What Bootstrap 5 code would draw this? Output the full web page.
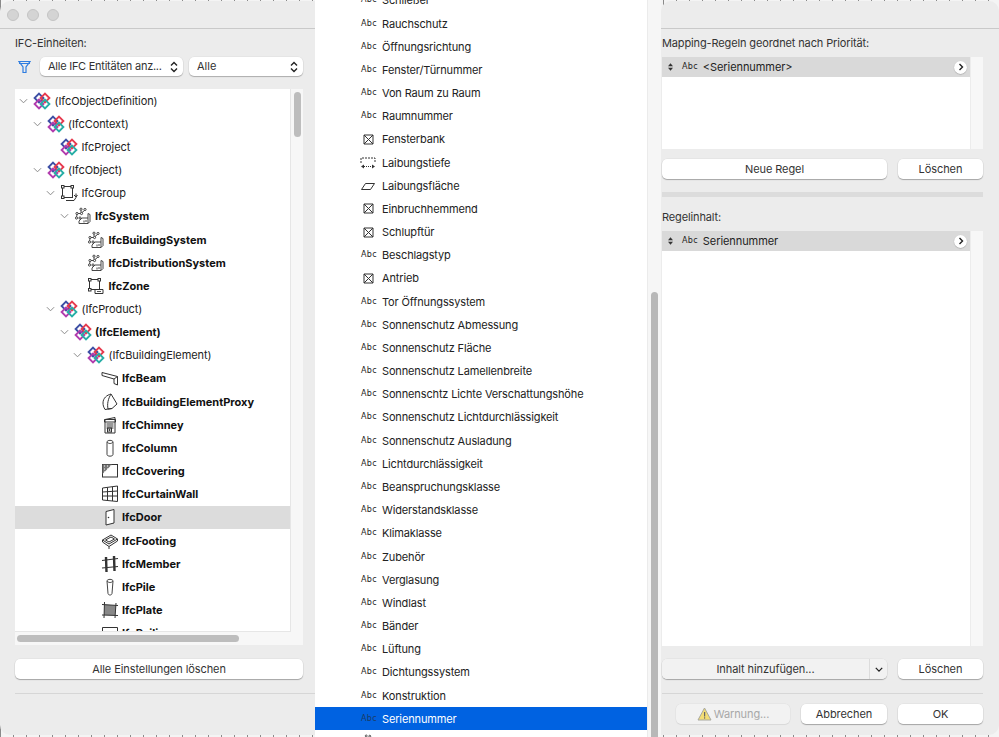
<!DOCTYPE html>
<html lang="de">
<head>
<meta charset="utf-8">
<title>IFC-Einheiten</title>
<link rel="stylesheet" href="https://cdn.jsdelivr.net/npm/bootstrap@5.3.0/dist/css/bootstrap.min.css">
<style>
html,body{height:737px;overflow:hidden}
body{background:#fff;font-family:Inter,"Liberation Sans",sans-serif;font-size:11px;line-height:16px;color:#222}
.defs-holder{position:absolute;width:0;height:0}
.stage{width:999px;height:737px;background:repeating-linear-gradient(90deg,#8a8a8a 0 1px,#f4f4f4 1px 13px)}
.pane-l,.pane-r{background:#ececec;height:734px;margin-top:1px;flex:none}
.pane-l{width:315px;border-radius:10px 0 0 10px;padding-right:12px}
.pane-r{width:338px;border-radius:10px 10px 10px 0;padding-right:16px}
.bar-l,.bar-r{height:28px;border-bottom:1px solid #c9c9c9;flex:none}
.bar-l{margin-right:-12px;padding-left:7px;gap:8px;border-top-left-radius:10px}
.bar-r{margin-right:-16px}
.dot{width:12px;height:12px;border-radius:50%;background:#d4d4d4;border:1px solid #c4c4c4}
.body-l{padding-left:15px}
.body-r{padding-left:1px}
.lbl{height:16px;margin-top:6px;color:#333;letter-spacing:-.13px}
.lbl-2{margin-top:12px}
.filter-row{margin-top:6px;height:19px}
.filter-ico{width:25px;flex:none;padding-left:3px}
select.mac-sel{height:19px;min-height:0;padding:0 16px 0 8px;border:0;border-radius:5px;font-size:11px;line-height:19px;color:#333;box-shadow:0 1px 1px rgba(0,0,0,.25),0 0 0 .5px rgba(0,0,0,.06);background-position:right 5px center;background-size:8px 12px;background-image:url("data:image/svg+xml,%3Csvg xmlns='http://www.w3.org/2000/svg' viewBox='0 0 8 12'%3E%3Cpath d='M1 4.5 4 1.5 7 4.5M1 7.5 4 10.5 7 7.5' fill='none' stroke='%23222' stroke-width='1.4'/%3E%3C/svg%3E")}
.sel-a{width:143px;flex:none;letter-spacing:-.25px}
.sel-b{width:114px;flex:none;margin-left:6px}
.tree-frame{margin-top:13px;height:556px;background:#f7f7f7}
.tree-top{height:543px}
.tree-view{width:276px;background:#fff;overflow:hidden;border-right:1px solid #e6e6e6;border-bottom:1px solid #e6e6e6}
.vtrack{width:12px;flex:none;padding:3px 2px 0 3px}
.vthumb{height:45px;background:#bdbdbd;border-radius:4px}
.htrack{height:13px;padding:3px 0 0 2px}
.hthumb{width:222px;height:7px;background:#bdbdbd;border-radius:4px}
.node{height:23.17px;white-space:nowrap;letter-spacing:-.08px}
.node.picked{background:#dcdcdc}
.node b{font-weight:700;color:#111;letter-spacing:0}
.lv1{padding-left:13.5px}.lv2{padding-left:27px}.lv3{padding-left:40.5px}.lv4{padding-left:54px}.lv5{padding-left:67.5px}
.twist{width:17px;flex:none;text-align:center;line-height:0}
.glyph{width:18px;height:18px;flex:none;margin:0 3.5px 0 1px}
.mac-btn{--bs-btn-padding-y:0;--bs-btn-padding-x:0;--bs-btn-font-size:11px;--bs-btn-bg:#fff;--bs-btn-border-width:0;--bs-btn-border-radius:5px;--bs-btn-color:#333;--bs-btn-line-height:20px;height:20px;letter-spacing:-.08px;box-shadow:0 1px 1px rgba(0,0,0,.28),0 0 0 .5px rgba(0,0,0,.06);display:block;flex:none}
.wide-btn{margin-top:14px;width:288px}
.sep{height:1px;background:#d6d6d6;margin-top:14px}
.sep-l{margin-right:-12px}
.menu-col{width:332px;flex:none;background:#fff;overflow:hidden}
.entry{height:23.18px;white-space:nowrap;color:#222;letter-spacing:-.14px}
.entry-first{margin-top:-11.2px}
.entry-hit{background:#0062e1;color:#fff}
.entry-hit .abc{color:#1b3b66}
.slot-w{width:67px;flex:none;display:flex;justify-content:center;padding-left:39px;line-height:0}
.abc{font-family:"DejaVu Sans",sans-serif;font-size:8px;line-height:16px;letter-spacing:.3px;color:#222;width:67px;flex:none;padding-left:46px}
.menu-track{width:14px;flex:none;background:#f6f6f6;border-left:1px solid #ebebeb;padding:292px 3px 0 3px}
.menu-thumb{height:445px;background:#b8b8b8;border-radius:4px 4px 0 0}
.tbl{background:#f7f7f7;flex:none;margin-top:6px}
.tbl-in{width:309px;background:#fff;border-right:1px solid #ececec}
.tbl-a{height:92px}
.tbl-b{height:415px}
.tbl-row{height:20px;background:#d9d9d9;padding-left:5px;padding-right:3px;letter-spacing:-.08px}
.tbl-row .abc{width:auto;padding-left:8px;margin-right:5px}
.more{width:13px;height:13px;border-radius:50%;background:#fff;box-shadow:0 .5px 1px rgba(0,0,0,.3);line-height:0}
.btn-row{height:20px;flex:none;gap:11px}
.gap-10{margin-top:10px}
.gap-13{margin-top:13px}
.btn-big{width:225px}
.btn-small{width:85px}
.btn-cancel{width:86px}
.split{width:225px;height:20px;flex:none;border-radius:5px;background:#f2f2f2;box-shadow:0 1px 1px rgba(0,0,0,.28),0 0 0 .5px rgba(0,0,0,.06);overflow:hidden}
.split .mac-btn{--bs-btn-bg:#f2f2f2;box-shadow:none;border-radius:0}
.split-main{width:207px}
.split-more{width:18px;border-left:1px solid #dcdcdc!important}
.hdiv{height:5px;background:#dcdcdc;margin-top:13px;flex:none}
.warn{width:114px;margin-left:14px;color:#a8a8a8;font-size:11px;letter-spacing:-.1px;gap:2px;height:20px;background:#f2f2f2;border-radius:5px;box-shadow:0 0 0 .5px rgba(0,0,0,.05),0 1px 1px rgba(0,0,0,.06)}
</style>
</head>
<body>
<svg class="defs-holder" aria-hidden="true">
<defs>
<symbol id="i-ifc" viewBox="0 0 18 18"><g fill="none" stroke-width="1.9"><path d="M6 1.6 10.4 6 6 10.4 1.6 6Z" stroke="#3d4fa5"/><path d="M12 1.6 16.4 6 12 10.4 7.6 6Z" stroke="#e63a4e"/><path d="M6 7.6 10.4 12 6 16.4 1.6 12Z" stroke="#b23cae"/><path d="M12 7.6 16.4 12 12 16.4 7.600 12Z" stroke="#27aea6"/></g></symbol>
<symbol id="i-group" viewBox="0 0 18 18"><g fill="none" stroke="#333"><rect x="2.500" y="2.500" width="10" height="11"/><rect x="1.500" y="1.500" width="2.500" height="2.500" fill="#fff"/><rect x="11" y="1.500" width="2.500" height="2.500" fill="#fff"/><rect x="1.500" y="12" width="2.500" height="2.500" fill="#fff"/><path d="M6 16.500h8l2-3v-4M14 11l2 2 1.500-2"/></g></symbol>
<symbol id="i-sys" viewBox="0 0 18 18"><g fill="none" stroke="#333" stroke-width=".9"><circle cx="7" cy="2.200" r="1.100"/><circle cx="11" cy="2.500" r="1.100"/><circle cx="3" cy="6.500" r="1.100"/><circle cx="2.500" cy="11" r="1.100"/><circle cx="7.500" cy="6.500" r="1.100"/><circle cx="6" cy="11" r="1.100"/><path d="M7 3.300v2.100M10.500 3.500 8 5.500M4.100 6.500h2.300M3 7.600 2.600 9.900"/><path d="M5 16.500h9l2-2v-7l-2-1v4.500H8L5 14z" fill="#fff"/><path d="M14 11v5.500M12 13v2M10 13.500v2"/></g></symbol>
<symbol id="i-zone" viewBox="0 0 18 18"><g fill="none" stroke="#333"><rect x="2.500" y="2.500" width="10" height="10"/><rect x="1.500" y="1.500" width="2.500" height="2.500" fill="#fff"/><rect x="11" y="1.500" width="2.500" height="2.500" fill="#fff"/><rect x="1.500" y="11.500" width="2.500" height="2.500" fill="#fff"/></g><path d="M8 12.500h8v4H8z" fill="#fff" stroke="#333"/><path d="M10 14.500h4" stroke="#555"/></symbol>
<symbol id="i-beam" viewBox="0 0 18 18"><path d="M1 3.500 16.500 7.500V16L13 14.500V10L1 6.500Z" fill="#fff" stroke="#333"/><path d="M13 10 16.500 7.500" stroke="#333"/></symbol>
<symbol id="i-proxy" viewBox="0 0 18 18"><path d="M2 10C2 5 6 2 10 1L16 11 11 15.500 4 16.500C2.500 14 2 12 2 10Z" fill="#fff" stroke="#333"/><path d="M10 1C7 6 6 11 7 16M7 16 11 15.500" fill="none" stroke="#333"/></symbol>
<symbol id="i-chim" viewBox="0 0 18 18"><path d="M4 3.500 14 1.500V17H4Z" fill="#fff" stroke="#333"/><path d="M3.500 3.500h11V6h-11zM5.500 8h7M5.500 10h7M5.500 12h7" fill="none" stroke="#333"/><rect x="6.500" y="12" width="4" height="4" fill="none" stroke="#333"/><circle cx="8.500" cy="14" r="1" fill="#333"/></symbol>
<symbol id="i-col" viewBox="0 0 18 18"><path d="M6 3C6 .8 12 .8 12 3V15.500C12 17.700 6 17.700 6 15.500Z" fill="#fff" stroke="#444"/><path d="M6 3C7.500 5 10.500 5 12 3" fill="none" stroke="#444"/></symbol>
<symbol id="i-cov" viewBox="0 0 18 18"><rect x="1.500" y="2.500" width="15" height="12.500" fill="#fff" stroke="#333"/><path d="M1.500 2.500H11L1.500 12Z" fill="#777"/><path d="M3 4h1M6 4h1M9 4h1M3 7h1M6 7h1M3 10h1" stroke="#fff"/></symbol>
<symbol id="i-cw" viewBox="0 0 18 18"><path d="M1.500 3 16.500 1V16.500L1.500 15ZM1.500 7 16.500 6M1.500 11 16.500 11M6.500 2.500V15.500M11.500 2V16" fill="#fff" stroke="#333"/></symbol>
<symbol id="i-door" viewBox="0 0 18 18"><path d="M5 3.500 13 1.500V15L5 17Z" fill="#fff" stroke="#333"/><circle cx="7.500" cy="9.500" r=".8" fill="#333"/></symbol>
<symbol id="i-foot" viewBox="0 0 18 18"><path d="M1.500 8 10 3 16.500 7 8 12Z" fill="#fff" stroke="#333"/><path d="M4.500 8 10 5 13.500 7 8 10ZM1.500 8V10L8 14.500 16.500 9V7M8 14.500V17" fill="none" stroke="#333"/></symbol>
<symbol id="i-memb" viewBox="0 0 18 18"><path d="M1 5.500 17 3.500M1 13 17 11.500" stroke="#333" stroke-width="1.200"/><path d="M5 2 5.500 17M13 1 13.500 16" stroke="#333" stroke-width="2.400"/></symbol>
<symbol id="i-pile" viewBox="0 0 18 18"><path d="M6 3C6 .8 12 .8 12 3L11 15.500C10.800 17.500 7.200 17.500 7 15.500Z" fill="#fff" stroke="#444"/><path d="M6 3C7.500 5 10.500 5 12 3" fill="none" stroke="#444"/></symbol>
<symbol id="i-plate" viewBox="0 0 18 18"><path d="M3.500 3.500 15 4.500 14 14.500 3 14Z" fill="#888"/><path d="M1 3.500 17 4.500M1 14 17 14.500M3.500 1 3 17M15 2 14 17" stroke="#333"/></symbol>
<symbol id="i-rail" viewBox="0 0 18 18"><path d="M1.500 3.500H16.500V8H1.500ZM3 8V17M15 8V17" fill="#fff" stroke="#333"/></symbol>
<symbol id="i-box" viewBox="0 0 11 11"><path d="M1 1h9v9H1zM1 1l9 9M10 1l-9 9" fill="none" stroke="#333"/></symbol>
<symbol id="i-depth" viewBox="0 0 16 12"><path d="M1 6V1h14v5" fill="none" stroke="#333" stroke-dasharray="2 1"/><path d="M4 9.500h8" fill="none" stroke="#333" stroke-dasharray="1 1"/><path d="M4 7.500 1 9.500 4 11.500ZM12 7.500 15 9.500 12 11.500Z" fill="#333"/></symbol>
<symbol id="i-area" viewBox="0 0 16 10"><path d="M1.500 8.500 5.500 2.500H14.500L10.500 8.500Z" fill="none" stroke="#333"/></symbol>
<symbol id="i-step" viewBox="0 0 8 12"><path d="M1 5 4 1.500 7 5ZM1 7 4 10.500 7 7Z" fill="#333"/></symbol>
<symbol id="i-chev" viewBox="0 0 10 6"><path d="M1 1 5 5 9 1" fill="none" stroke="#8a8a8a" stroke-width="1.100"/></symbol>
</defs>
</svg>

<div class="stage d-flex">
  <section class="pane-l d-flex flex-column">
    <div class="bar-l d-flex align-items-center"><span class="dot"></span><span class="dot"></span><span class="dot"></span></div>
    <div class="body-l d-flex flex-column">
      <div class="lbl">IFC-Einheiten:</div>
      <div class="filter-row d-flex align-items-center">
        <span class="filter-ico d-flex"><svg width="13" height="14" viewBox="0 0 13 14"><path d="M1 1.500h11L8 7V12.500H5V7Z" fill="none" stroke="#2f7de0" stroke-width="1.200"/><path d="M1 3.500h11" stroke="#2f7de0"/></svg></span>
        <select class="form-select mac-sel sel-a"><option>Alle IFC Entitäten anz...</option></select>
        <select class="form-select mac-sel sel-b"><option>Alle</option></select>
      </div>
      <div class="tree-frame d-flex flex-column">
        <div class="tree-top d-flex">
          <div class="tree-view">
            <div class="node d-flex align-items-center"><span class="twist"><svg width="9" height="6"><use href="#i-chev"/></svg></span><svg class="glyph"><use href="#i-ifc"/></svg>(IfcObjectDefinition)</div>
            <div class="node lv1 d-flex align-items-center"><span class="twist"><svg width="9" height="6"><use href="#i-chev"/></svg></span><svg class="glyph"><use href="#i-ifc"/></svg>(IfcContext)</div>
            <div class="node lv2 d-flex align-items-center"><span class="twist"></span><svg class="glyph"><use href="#i-ifc"/></svg>IfcProject</div>
            <div class="node lv1 d-flex align-items-center"><span class="twist"><svg width="9" height="6"><use href="#i-chev"/></svg></span><svg class="glyph"><use href="#i-ifc"/></svg>(IfcObject)</div>
            <div class="node lv2 d-flex align-items-center"><span class="twist"><svg width="9" height="6"><use href="#i-chev"/></svg></span><svg class="glyph"><use href="#i-group"/></svg>IfcGroup</div>
            <div class="node lv3 d-flex align-items-center"><span class="twist"><svg width="9" height="6"><use href="#i-chev"/></svg></span><svg class="glyph"><use href="#i-sys"/></svg><b>IfcSystem</b></div>
            <div class="node lv4 d-flex align-items-center"><span class="twist"></span><svg class="glyph"><use href="#i-sys"/></svg><b>IfcBuildingSystem</b></div>
            <div class="node lv4 d-flex align-items-center"><span class="twist"></span><svg class="glyph"><use href="#i-sys"/></svg><b>IfcDistributionSystem</b></div>
            <div class="node lv4 d-flex align-items-center"><span class="twist"></span><svg class="glyph"><use href="#i-zone"/></svg><b>IfcZone</b></div>
            <div class="node lv2 d-flex align-items-center"><span class="twist"><svg width="9" height="6"><use href="#i-chev"/></svg></span><svg class="glyph"><use href="#i-ifc"/></svg>(IfcProduct)</div>
            <div class="node lv3 d-flex align-items-center"><span class="twist"><svg width="9" height="6"><use href="#i-chev"/></svg></span><svg class="glyph"><use href="#i-ifc"/></svg><b>(IfcElement)</b></div>
            <div class="node lv4 d-flex align-items-center"><span class="twist"><svg width="9" height="6"><use href="#i-chev"/></svg></span><svg class="glyph"><use href="#i-ifc"/></svg>(IfcBuildingElement)</div>
            <div class="node lv5 d-flex align-items-center"><span class="twist"></span><svg class="glyph"><use href="#i-beam"/></svg><b>IfcBeam</b></div>
            <div class="node lv5 d-flex align-items-center"><span class="twist"></span><svg class="glyph"><use href="#i-proxy"/></svg><b>IfcBuildingElementProxy</b></div>
            <div class="node lv5 d-flex align-items-center"><span class="twist"></span><svg class="glyph"><use href="#i-chim"/></svg><b>IfcChimney</b></div>
            <div class="node lv5 d-flex align-items-center"><span class="twist"></span><svg class="glyph"><use href="#i-col"/></svg><b>IfcColumn</b></div>
            <div class="node lv5 d-flex align-items-center"><span class="twist"></span><svg class="glyph"><use href="#i-cov"/></svg><b>IfcCovering</b></div>
            <div class="node lv5 d-flex align-items-center"><span class="twist"></span><svg class="glyph"><use href="#i-cw"/></svg><b>IfcCurtainWall</b></div>
            <div class="node picked lv5 d-flex align-items-center"><span class="twist"></span><svg class="glyph"><use href="#i-door"/></svg><b>IfcDoor</b></div>
            <div class="node lv5 d-flex align-items-center"><span class="twist"></span><svg class="glyph"><use href="#i-foot"/></svg><b>IfcFooting</b></div>
            <div class="node lv5 d-flex align-items-center"><span class="twist"></span><svg class="glyph"><use href="#i-memb"/></svg><b>IfcMember</b></div>
            <div class="node lv5 d-flex align-items-center"><span class="twist"></span><svg class="glyph"><use href="#i-pile"/></svg><b>IfcPile</b></div>
            <div class="node lv5 d-flex align-items-center"><span class="twist"></span><svg class="glyph"><use href="#i-plate"/></svg><b>IfcPlate</b></div>
            <div class="node lv5 d-flex align-items-center"><span class="twist"></span><svg class="glyph"><use href="#i-rail"/></svg><b>IfcRailing</b></div>
          </div>
          <div class="vtrack"><div class="vthumb"></div></div>
        </div>
        <div class="htrack"><div class="hthumb"></div></div>
      </div>
      <button type="button" class="btn btn-light mac-btn wide-btn">Alle Einstellungen löschen</button>
      <div class="sep sep-l"></div>
    </div>
  </section>

  <section class="menu-col">
    <div class="entry entry-first d-flex align-items-center"><span class="abc">Abc</span>Schließer</div>
    <div class="entry d-flex align-items-center"><span class="abc">Abc</span>Rauchschutz</div>
    <div class="entry d-flex align-items-center"><span class="abc">Abc</span>Öffnungsrichtung</div>
    <div class="entry d-flex align-items-center"><span class="abc">Abc</span>Fenster/Türnummer</div>
    <div class="entry d-flex align-items-center"><span class="abc">Abc</span>Von Raum zu Raum</div>
    <div class="entry d-flex align-items-center"><span class="abc">Abc</span>Raumnummer</div>
    <div class="entry d-flex align-items-center"><span class="slot-w"><svg width="11" height="11"><use href="#i-box"/></svg></span>Fensterbank</div>
    <div class="entry d-flex align-items-center"><span class="slot-w"><svg width="16" height="12"><use href="#i-depth"/></svg></span>Laibungstiefe</div>
    <div class="entry d-flex align-items-center"><span class="slot-w"><svg width="16" height="10"><use href="#i-area"/></svg></span>Laibungsfläche</div>
    <div class="entry d-flex align-items-center"><span class="slot-w"><svg width="11" height="11"><use href="#i-box"/></svg></span>Einbruchhemmend</div>
    <div class="entry d-flex align-items-center"><span class="slot-w"><svg width="11" height="11"><use href="#i-box"/></svg></span>Schlupftür</div>
    <div class="entry d-flex align-items-center"><span class="abc">Abc</span>Beschlagstyp</div>
    <div class="entry d-flex align-items-center"><span class="slot-w"><svg width="11" height="11"><use href="#i-box"/></svg></span>Antrieb</div>
    <div class="entry d-flex align-items-center"><span class="abc">Abc</span>Tor Öffnungssystem</div>
    <div class="entry d-flex align-items-center"><span class="abc">Abc</span>Sonnenschutz Abmessung</div>
    <div class="entry d-flex align-items-center"><span class="abc">Abc</span>Sonnenschutz Fläche</div>
    <div class="entry d-flex align-items-center"><span class="abc">Abc</span>Sonnenschutz Lamellenbreite</div>
    <div class="entry d-flex align-items-center"><span class="abc">Abc</span>Sonnenschtz Lichte Verschattungshöhe</div>
    <div class="entry d-flex align-items-center"><span class="abc">Abc</span>Sonnenschutz Lichtdurchlässigkeit</div>
    <div class="entry d-flex align-items-center"><span class="abc">Abc</span>Sonnenschutz Ausladung</div>
    <div class="entry d-flex align-items-center"><span class="abc">Abc</span>Lichtdurchlässigkeit</div>
    <div class="entry d-flex align-items-center"><span class="abc">Abc</span>Beanspruchungsklasse</div>
    <div class="entry d-flex align-items-center"><span class="abc">Abc</span>Widerstandsklasse</div>
    <div class="entry d-flex align-items-center"><span class="abc">Abc</span>Klimaklasse</div>
    <div class="entry d-flex align-items-center"><span class="abc">Abc</span>Zubehör</div>
    <div class="entry d-flex align-items-center"><span class="abc">Abc</span>Verglasung</div>
    <div class="entry d-flex align-items-center"><span class="abc">Abc</span>Windlast</div>
    <div class="entry d-flex align-items-center"><span class="abc">Abc</span>Bänder</div>
    <div class="entry d-flex align-items-center"><span class="abc">Abc</span>Lüftung</div>
    <div class="entry d-flex align-items-center"><span class="abc">Abc</span>Dichtungssystem</div>
    <div class="entry d-flex align-items-center"><span class="abc">Abc</span>Konstruktion</div>
    <div class="entry entry-hit d-flex align-items-center"><span class="abc">Abc</span>Seriennummer</div>
    <div class="entry d-flex align-items-center"><span class="slot-w"><svg width="16" height="16"><use href="#i-sys"/></svg></span></div>
  </section>
  <div class="menu-track"><div class="menu-thumb"></div></div>

  <section class="pane-r d-flex flex-column">
    <div class="bar-r"></div>
    <div class="body-r d-flex flex-column">
      <div class="lbl">Mapping-Regeln geordnet nach Priorität:</div>
      <div class="tbl tbl-a d-flex">
        <div class="tbl-in">
          <div class="tbl-row d-flex align-items-center"><svg width="7" height="10"><use href="#i-step"/></svg><span class="abc">Abc</span><span class="flex-grow-1">&lt;Seriennummer&gt;</span><span class="more d-flex align-items-center justify-content-center"><svg width="6" height="8" viewBox="0 0 6 8"><path d="M1.500 1 4.500 4 1.500 7" fill="none" stroke="#222" stroke-width="1.400"/></svg></span></div>
        </div>
      </div>
      <div class="btn-row d-flex gap-10">
        <button type="button" class="btn btn-light mac-btn btn-big">Neue Regel</button>
        <button type="button" class="btn btn-light mac-btn btn-small">Löschen</button>
      </div>
      <div class="hdiv"></div>
      <div class="lbl lbl-2">Regelinhalt:</div>
      <div class="tbl tbl-b d-flex">
        <div class="tbl-in">
          <div class="tbl-row d-flex align-items-center"><svg width="7" height="10"><use href="#i-step"/></svg><span class="abc">Abc</span><span class="flex-grow-1">Seriennummer</span><span class="more d-flex align-items-center justify-content-center"><svg width="6" height="8" viewBox="0 0 6 8"><path d="M1.500 1 4.500 4 1.500 7" fill="none" stroke="#222" stroke-width="1.400"/></svg></span></div>
        </div>
      </div>
      <div class="btn-row d-flex gap-13">
        <div class="split d-flex">
          <button type="button" class="btn btn-light mac-btn split-main">Inhalt hinzufügen...</button>
          <button type="button" class="btn btn-light mac-btn split-more d-flex align-items-center justify-content-center"><svg width="8" height="5" viewBox="0 0 10 6"><path d="M1 1 5 5 9 1" fill="none" stroke="#222" stroke-width="1.600"/></svg></button>
        </div>
        <button type="button" class="btn btn-light mac-btn btn-small">Löschen</button>
      </div>
      <div class="sep"></div>
      <div class="btn-row d-flex gap-10">
        <div class="warn d-flex align-items-center justify-content-center"><svg width="15" height="14" viewBox="0 0 15 14"><path d="M7.500 1 14 13H1Z" fill="#f3dd74" stroke="#a8a8a0"/><rect x="7" y="5" width="1.200" height="4.500" fill="#666"/><rect x="7" y="10.300" width="1.200" height="1.300" fill="#666"/></svg>Warnung...</div>
        <button type="button" class="btn btn-light mac-btn btn-cancel">Abbrechen</button>
        <button type="button" class="btn btn-light mac-btn btn-small">OK</button>
      </div>
    </div>
  </section>
</div>
<script src="https://cdn.jsdelivr.net/npm/bootstrap@5.3.0/dist/js/bootstrap.bundle.min.js"></script>
</body>
</html>
